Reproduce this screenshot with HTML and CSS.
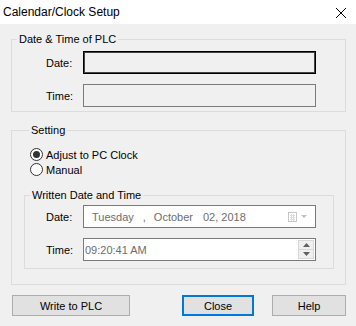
FILE: index.html
```html
<!DOCTYPE html>
<html>
<head>
<meta charset="utf-8">
<link rel="stylesheet" href="styles.css">
</head>
<body>
<div class="window">
  <div class="titlebar">
    <span class="title">Calendar/Clock Setup</span>
    <svg class="close-x" width="12" height="12" viewBox="0 0 12 12"><path d="M1 1 L11 11 M11 1 L1 11" stroke="#000" stroke-width="1" fill="none"/></svg>
  </div>
  <div class="content">
    <fieldset class="group plc">
      <legend>Date &amp; Time of PLC</legend>
      <div class="row">
        <span class="label">Date:</span>
        <div class="field dark"></div>
      </div>
      <div class="row">
        <span class="label">Time:</span>
        <div class="field gray"></div>
      </div>
    </fieldset>

    <fieldset class="group setting">
      <legend>Setting</legend>
      <div class="radios">
        <label class="radio"><span class="dot checked"></span>Adjust to PC Clock</label>
        <label class="radio"><span class="dot"></span>Manual</label>
      </div>
      <fieldset class="group written">
        <legend>Written Date and Time</legend>
        <div class="row">
          <span class="label">Date:</span>
          <div class="field input date">
            <span class="d-day">Tuesday</span>
            <span class="d-comma">,</span>
            <span class="d-month">October</span>
            <span class="d-rest">02, 2018</span>
            <span class="cal">
              <svg width="20" height="10" viewBox="0 0 20 10">
                <rect x="0.5" y="0.5" width="8" height="9" fill="#fff" stroke="#c8c8c8"/>
                <path d="M2 3.5h5M2 5.5h5M2 7.5h5M3.5 2v7M5.5 2v7" stroke="#dedede" stroke-width="1"/>
                <path d="M13 3 L19 3 L16 6 Z" fill="#c0c0c0"/>
              </svg>
            </span>
          </div>
        </div>
        <div class="row">
          <span class="label">Time:</span>
          <div class="field input time">
            <span class="t-val">09:20:41 AM</span>
            <span class="spin">
              <span class="spin-btn"><svg width="7" height="4" viewBox="0 0 7 4"><path d="M0 4 L3.5 0 L7 4 Z" fill="#606060"/></svg></span>
              <span class="spin-btn"><svg width="7" height="4" viewBox="0 0 7 4"><path d="M0 0 L3.5 4 L7 0 Z" fill="#606060"/></svg></span>
            </span>
          </div>
        </div>
      </fieldset>
    </fieldset>

    <div class="buttons">
      <button class="btn write">Write to PLC</button>
      <div class="right-btns">
        <button class="btn close default">Close</button>
        <button class="btn help">Help</button>
      </div>
    </div>
  </div>
</div>
</body>
</html>
```

FILE: styles.css
```css
* { box-sizing: border-box; }
html, body { margin: 0; padding: 0; }
body {
  font-family: "Liberation Sans", Arial, sans-serif;
  font-size: 11px;
  color: #000;
  background: #f0f0f0;
}
.window {
  width: 356px;
  height: 326px;
  background: #f0f0f0;
  overflow: hidden;
}
.titlebar {
  height: 24px;
  background: #fff;
  display: flex;
  align-items: center;
  justify-content: space-between;
  padding: 0 9px 0 3px;
}
.title {
  font-size: 12px;
}
.close-x { display: block; margin-top: 1px; }
.content {
  padding: 9px 10px 0 11px;
}
fieldset.group {
  margin: 0;
  padding: 0;
  border: 1px solid #dcdcdc;
  min-inline-size: 0;
}
fieldset.group legend {
  padding: 0 2px;
  margin-left: 5px;
  line-height: 13px;
  font-size: 11px;
}
.plc {
  padding: 5px 0 4px 0 !important;
}
.row {
  display: flex;
  align-items: center;
  height: 23px;
}
.row + .row { margin-top: 10px; }
.label {
  width: 71px;
  padding-left: 34px;
}
.field {
  width: 233px;
  height: 23px;
}
.field.dark {
  border: 1px solid #000;
  box-shadow: inset 0 0 0 1px #444;
  background: #f0f0f0;
}
.field.gray {
  border: 1px solid #7a7a7a;
  background: #f0f0f0;
}
.setting {
  margin-top: 12px !important;
  padding: 10px 11px 15px 12px !important;
}
.radios {
  display: flex;
  flex-direction: column;
  padding-left: 6px;
}
.radio {
  display: flex;
  align-items: center;
  height: 15px;
  gap: 3px;
}
.dot {
  width: 13px;
  height: 13px;
  border: 1px solid #333;
  border-radius: 50%;
  background: #fff;
  display: flex;
  align-items: center;
  justify-content: center;
}
.dot.checked::after {
  content: "";
  width: 7px;
  height: 7px;
  border-radius: 50%;
  background: #333;
}
.written {
  margin-top: 12px !important;
  padding: 3px 0 7px 0 !important;
}
.written .label { padding-left: 21px; width: 58px; }
.field.input {
  border: 1px solid #7a7a7a;
  background: #fff;
  display: flex;
  align-items: center;
  color: #6d6d6d;
}
.date { padding-left: 8px; }
.d-comma { margin-left: 9px; }
.d-month { margin-left: 8px; }
.d-rest { margin-left: 10px; }
.cal { margin-left: auto; margin-right: 7px; display: flex; }
.time { padding-left: 1px; color: #7a7a7a; }
.spin {
  margin-left: auto;
  margin-right: 1px;
  width: 16px;
  height: 19px;
  display: flex;
  flex-direction: column;
  border: 1px solid #d8d8d8;
  background: #f0f0f0;
}
.spin-btn {
  flex: 1;
  display: flex;
  align-items: center;
  justify-content: center;
}
.spin-btn + .spin-btn { border-top: 1px solid #d8d8d8; }
.buttons {
  margin-top: 10px;
  display: flex;
  justify-content: space-between;
  padding-left: 1px;
}
.right-btns { display: flex; gap: 18px; }
.btn {
  font-family: "Liberation Sans", Arial, sans-serif;
  font-size: 11px;
  height: 21px;
  background: #e1e1e1;
  border: 1px solid #adadad;
  padding: 0;
  color: #000;
}
.write { width: 118px; }
.close { width: 72px; }
.help { width: 74px; }
.btn.default { border: 2px solid #0078d7; }
```
